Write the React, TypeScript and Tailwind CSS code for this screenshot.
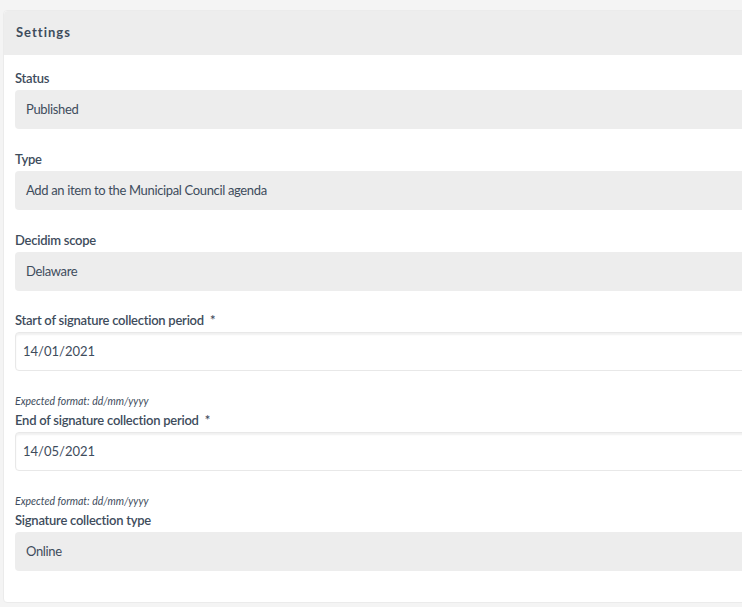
import React from "react";

const font = { fontFamily: "'Source Sans Pro', Lato, 'Noto Sans', sans-serif" };

function Label({ children, req }: { children: React.ReactNode; req?: boolean }) {
  return (
    <div className="text-[13px] font-semibold leading-[20px] tracking-[-0.25px] text-[#3e4c5c] mb-[2px] h-[20px]">
      {children}
      {req && <span className="ml-[6px]">*</span>}
    </div>
  );
}

function Select({ value }: { value: string }) {
  return (
    <div className="h-[39px] bg-[#ededed] rounded-[4px] flex items-center pl-[11px] text-[13px] tracking-[-0.35px] text-[#3e4c5c]">
      {value}
    </div>
  );
}

function Input({ value }: { value: string }) {
  return (
    <div className="h-[39px] bg-white rounded-[4px] border border-[#e8e8e8] shadow-[inset_0_2px_2px_rgba(0,0,0,0.06)] flex items-center pl-[7px] text-[13px] text-[#3e4c5c]">
      {value}
    </div>
  );
}

function Help() {
  return (
    <div className="mt-[23px] mb-[2px] text-[10.5px] italic text-[#3e4c5c] leading-[14px]">Expected format: dd/mm/yyyy</div>
  );
}

export default function App() {
  return (
    <div className="min-h-[607px] w-[742px] bg-[#f4f4f4] pt-[10px] pl-[3px] overflow-hidden" style={font}>
      <div className="w-[800px] bg-white rounded-tl-[4px] rounded-bl-[4px] border border-[#ebebeb] h-[593px]">
        <div className="h-[44px] bg-[#ededed] flex items-center pl-[12px] rounded-tl-[4px]">
          <span className="text-[13px] font-bold tracking-[1px] text-[#3e4c5c]">Settings</span>
        </div>
        <div className="pl-[11px] pt-[13px]">
          <div className="mb-[20px]">
            <Label>Status</Label>
            <Select value="Published" />
          </div>
          <div className="mb-[20px]">
            <Label>Type</Label>
            <Select value="Add an item to the Municipal Council agenda" />
          </div>
          <div className="mb-[19px]">
            <Label>Decidim scope</Label>
            <Select value="Delaware" />
          </div>
          <div>
            <Label req>Start of signature collection period</Label>
            <Input value="14/01/2021" />
            <Help />
          </div>
          <div>
            <Label req>End of signature collection period</Label>
            <Input value="14/05/2021" />
            <Help />
          </div>
          <div>
            <Label>Signature collection type</Label>
            <Select value="Online" />
          </div>
        </div>
      </div>
    </div>
  );
}
